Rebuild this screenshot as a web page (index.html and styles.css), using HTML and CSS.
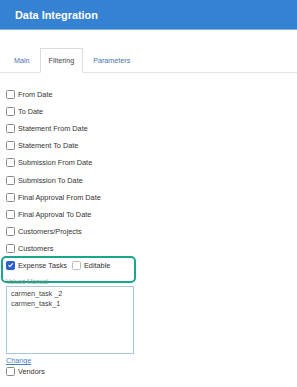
FILE: index.html
```html
<!DOCTYPE html>
<html lang="en">
<head>
    <meta charset="UTF-8">
    <meta name="viewport" content="width=device-width, initial-scale=1.0">
    <title>Data Integration</title>
    <link rel="stylesheet" href="styles.css">
</head>
<body>
    <header class="topbar">Data Integration</header>

    <nav class="tabs">
        <span class="tab">Main</span>
        <span class="tab active">Filtering</span>
        <span class="tab">Parameters</span>
    </nav>

    <div class="filters">
        <label class="row"><span class="box"></span>From Date</label>
        <label class="row"><span class="box"></span>To Date</label>
        <label class="row"><span class="box"></span>Statement From Date</label>
        <label class="row"><span class="box"></span>Statement To Date</label>
        <label class="row"><span class="box"></span>Submission From Date</label>
        <label class="row"><span class="box"></span>Submission To Date</label>
        <label class="row"><span class="box"></span>Final Approval From Date</label>
        <label class="row"><span class="box"></span>Final Approval To Date</label>
        <label class="row"><span class="box"></span>Customers/Projects</label>
        <label class="row"><span class="box"></span>Customers</label>

        <div class="row highlight">
            <span class="box checked">
                <svg viewBox="0 0 10 10" width="8" height="8"><path d="M2 5.2 L4.2 7.4 L8.2 2.6" fill="none" stroke="#fff" stroke-width="1.6"/></svg>
            </span>
            Expense Tasks
            <span class="box editable"></span>Editable
        </div>

        <div class="values-label">Values Manual</div>
        <div class="values">
            <div>carmen_task _2</div>
            <div>carmen_task_1</div>
        </div>
        <a class="change" href="#">Change</a>

        <label class="row"><span class="box"></span>Vendors</label>
    </div>
</body>
</html>
```

FILE: styles.css
```css
body {
    margin: 0;
    font-family: "Liberation Sans", Arial, sans-serif;
    background-color: #fff;
    color: #333;
}
.topbar {
    height: 30px;
    display: flex;
    align-items: center;
    padding-left: 15px;
    background-color: #3581d2;
    border-bottom: 1px solid #7fb0e6;
    box-sizing: border-box;
    color: #fff;
    font-weight: bold;
    font-size: 10.9px;
}
.tabs {
    display: flex;
    margin-top: 18px;
    padding-left: 4px;
    height: 24px;
    border-bottom: 1px solid #e4e4e4;
}
.tab {
    display: flex;
    align-items: center;
    padding: 0 10px;
    font-size: 7.2px;
    color: #4a74ab;
}
.tab.active {
    padding: 0 8px;
    color: #444;
    background-color: #fff;
    border: 1px solid #dcdcdc;
    border-bottom: 1px solid #fff;
    margin-bottom: -1px;
}
.filters {
    padding-top: 13px;
}
.row {
    display: flex;
    align-items: center;
    height: 17.1px;
    padding-left: 6px;
    font-size: 7.3px;
    color: #333;
}
.box {
    width: 7px;
    height: 7px;
    border: 1px solid #8a8a8a;
    border-radius: 1.5px;
    margin-right: 3px;
    display: flex;
    align-items: center;
    justify-content: center;
    flex-shrink: 0;
}
.box.checked {
    background-color: #2c5fd0;
    border-color: #2c5fd0;
}
.box.editable {
    margin-left: 5px;
    border-color: #bbb;
}
.highlight {
    position: relative;
}
/* annotation frame drawn over the row */
.highlight::after {
    content: "";
    position: absolute;
    left: 1px;
    top: -1px;
    width: 131px;
    height: 23px;
    border: 2px solid #1aa68a;
    border-radius: 5px;
}
.values-label {
    margin: 4px 0 0 6px;
    font-size: 6.5px;
    line-height: 8px;
    color: #999;
}
.values {
    margin-left: 6px;
    width: 128px;
    height: 68px;
    box-sizing: border-box;
    border: 1px solid #aac6e6;
    padding: 2px 4px;
    font-size: 7.2px;
    line-height: 10px;
    color: #444;
}
.change {
    display: block;
    margin: 2px 0 -3px 6px;
    font-size: 7.2px;
    line-height: 10px;
    color: #4a7fc3;
}
```
